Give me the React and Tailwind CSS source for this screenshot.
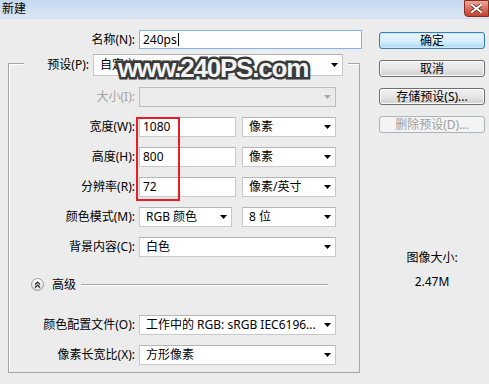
import React from "react";

const FONT = "font-['Noto_Sans','Noto_Sans_CJK_SC',sans-serif]";

function Arrow({ disabled }) {
  return (
    <svg width="7" height="4" viewBox="0 0 7 4" className="shrink-0">
      <path d="M0 0H7L3.5 4Z" fill={disabled ? "#a8a8a8" : "#000"} />
    </svg>
  );
}

function Select({ className = "", children, disabled }) {
  return (
    <div
      className={`flex items-center justify-between border pl-[6px] pr-[4px] ${
        disabled
          ? "border-[#bdbdbd] bg-[#ebebeb]"
          : "border-[#c9c9c9] border-t-[#b4b4b4] bg-white"
      } ${className}`}
    >
      <span className="whitespace-nowrap leading-[16px]">{children}</span>
      <Arrow disabled={disabled} />
    </div>
  );
}

function Input({ className = "", children }) {
  return (
    <div
      className={`flex items-center border border-[#c9c9c9] border-t-[#b4b4b4] bg-white pl-[3px] ${className}`}
    >
      <span className="leading-[16px]">{children}</span>
    </div>
  );
}

function Label({ children, disabled }) {
  return (
    <div
      className={`w-[126px] text-right whitespace-nowrap leading-[16px] ${
        disabled ? "text-[#a3a3a3]" : "text-black"
      }`}
    >
      {children}
    </div>
  );
}

function Button({ children, variant }) {
  const base =
    "h-[17px] w-[106px] rounded-[3px] border flex items-center justify-center leading-[15px]";
  if (variant === "default")
    return (
      <div
        className={`${base} border-[#3c7fb1] bg-gradient-to-b from-[#eaf6fd] via-[#d9f0fc] to-[#a7d9f5] text-black shadow-[inset_0_0_0_1px_#cbe8f8]`}
      >
        {children}
      </div>
    );
  if (variant === "disabled")
    return (
      <div className={`${base} border-[#adb2b5] bg-[#f4f4f4] text-[#a0a0a0]`}>
        {children}
      </div>
    );
  return (
    <div
      className={`${base} border-[#707070] bg-gradient-to-b from-[#f2f2f2] via-[#e6e6e6] to-[#cfcfcf] text-black shadow-[inset_0_0_0_1px_#fbfbfb]`}
    >
      {children}
    </div>
  );
}

export default function App() {
  return (
    <div
      className={`${FONT} text-[12px] text-black w-[489px] h-[384px] bg-[#ececec] overflow-hidden relative`}
    >
      {/* title bar */}
      <div className="h-[19px] bg-gradient-to-b from-[#c4d8ef] to-[#dae6f4] flex items-center justify-between border-b border-[#cfdbe8]">
        <span className="pl-[2px] leading-[16px]">新建</span>
        <div className="w-[25px] h-[17px] -mt-[2px] rounded-bl-[4px] border border-[#8c2b1e] bg-gradient-to-b from-[#e9a99b] via-[#d66f5f] to-[#c0432f] flex items-center justify-center">
          <svg width="11" height="9" viewBox="0 0 11 9">
            <path
              d="M1 1L10 8M10 1L1 8"
              stroke="#5a2018"
              strokeWidth="3.4"
              strokeLinecap="square"
            />
            <path
              d="M1 1L10 8M10 1L1 8"
              stroke="#ffffff"
              strokeWidth="2"
              strokeLinecap="square"
            />
          </svg>
        </div>
      </div>

      <div className="flex">
        {/* left column */}
        <div className="w-[365px] pl-[8px] pt-[11px]">
          <div className="flex items-center h-[19px]">
            <div className="w-[127px] text-right leading-[16px]">名称(N):</div>
            <div className="ml-[4px] w-[223px] h-[19px] border border-[#7eb4ea] bg-white flex items-center pl-[3px]">
              <span className="leading-[16px]">240ps</span>
              <span className="w-px h-[13px] bg-black ml-px" />
            </div>
          </div>

          {/* group box */}
          <div className="mt-[14px] w-[352px] h-[310px] border border-[#a5a5a5] shadow-[inset_1px_1px_0_#ffffff]">
            {/* preset row overlaying the top border */}
            <div className="-mt-[10px] ml-[15px] w-[324px] h-[22px] bg-[#ececec] flex items-center">
              <div className="w-[65px] text-right leading-[16px] whitespace-nowrap">预设(P):</div>
              <Select className="ml-[4px] w-[250px] h-[22px]">自定义</Select>
            </div>

            <div className="mt-[11px] flex items-center h-[20px]">
              <Label disabled>大小(I):</Label>
              <Select disabled className="ml-[4px] w-[197px] h-[20px]"></Select>
            </div>

            <div className="mt-[10px] flex items-center h-[20px]">
              <Label>宽度(W):</Label>
              <Input className="ml-[4px] w-[97px] h-[20px]">1080</Input>
              <Select className="ml-[6px] w-[94px] h-[20px]">像素</Select>
            </div>

            <div className="mt-[10px] flex items-center h-[20px]">
              <Label>高度(H):</Label>
              <Input className="ml-[4px] w-[97px] h-[20px]">800</Input>
              <Select className="ml-[6px] w-[94px] h-[20px]">像素</Select>
            </div>

            <div className="mt-[10px] flex items-center h-[20px]">
              <Label>分辨率(R):</Label>
              <Input className="ml-[4px] w-[97px] h-[20px]">72</Input>
              <Select className="ml-[6px] w-[94px] h-[20px]">像素/英寸</Select>
            </div>

            <div className="mt-[10px] flex items-center h-[20px]">
              <Label>颜色模式(M):</Label>
              <Select className="ml-[4px] w-[93px] h-[20px]">RGB 颜色</Select>
              <Select className="ml-[10px] w-[94px] h-[20px]">8 位</Select>
            </div>

            <div className="mt-[10px] flex items-center h-[20px]">
              <Label>背景内容(C):</Label>
              <Select className="ml-[4px] w-[197px] h-[20px]">白色</Select>
            </div>

            {/* advanced */}
            <div className="mt-[21px] flex items-center h-[13px]">
              <div className="ml-[22px] w-[13px] h-[13px] rounded-full border border-[#9a9a9a] bg-gradient-to-b from-white to-[#dcdcdc] flex items-center justify-center">
                <svg width="7" height="7" viewBox="0 0 7 7">
                  <path d="M1 3.5L3.5 1L6 3.5M1 6.5L3.5 4L6 6.5" fill="none" stroke="#222" strokeWidth="1.2" />
                </svg>
              </div>
              <span className="ml-[8px] leading-[16px]">高级</span>
              <div className="ml-[5px] w-[247px] h-[2px] border-t border-[#a5a5a5] border-b border-b-white" />
            </div>

            <div className="mt-[24px] flex items-center h-[20px]">
              <Label>颜色配置文件(O):</Label>
              <Select className="ml-[4px] w-[197px] h-[20px]">工作中的 RGB: sRGB IEC6196...</Select>
            </div>

            <div className="mt-[10px] flex items-center h-[20px]">
              <Label>像素长宽比(X):</Label>
              <Select className="ml-[4px] w-[197px] h-[20px]">方形像素</Select>
            </div>
          </div>
        </div>

        {/* right column */}
        <div className="ml-[14px] w-[106px] pt-[13px] flex flex-col">
          <Button variant="default">确定</Button>
          <div className="mt-[11px]">
            <Button>取消</Button>
          </div>
          <div className="mt-[11px]">
            <Button>存储预设(S)...</Button>
          </div>
          <div className="mt-[11px]">
            <Button variant="disabled">删除预设(D)...</Button>
          </div>
          <div className="mt-[117px] h-[16px] flex items-center justify-center leading-[16px]">图像大小:</div>
          <div className="mt-[8px] h-[16px] flex items-center justify-center leading-[16px]">2.47M</div>
        </div>
      </div>

      {/* red highlight box */}
      <div className="absolute left-[136px] top-[117px] w-[44px] h-[84px] border-2 border-[#ec1c24]" />

      {/* watermark */}
      <div className="absolute left-[118px] top-[55px] font-['Liberation_Sans',sans-serif] font-bold text-[26px] leading-none tracking-[-1.2px] text-[#f4f4f4] [-webkit-text-stroke:5px_#3a3a3a] [paint-order:stroke_fill] whitespace-nowrap">
        www.240PS.com
      </div>
    </div>
  );
}
